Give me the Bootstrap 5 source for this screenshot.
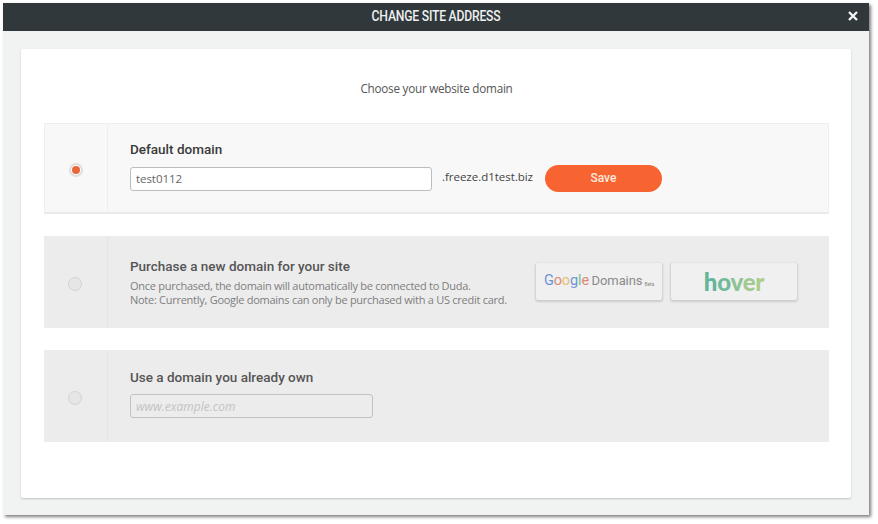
<!DOCTYPE html>
<html lang="en">
<head>
<meta charset="utf-8">
<title>Change site address</title>
<link href="https://cdn.jsdelivr.net/npm/bootstrap@5.3.0/dist/css/bootstrap.min.css" rel="stylesheet">
<style>
html,body{background:#fff;height:100%;overflow:hidden}
body{font-family:"Open Sans","Liberation Sans",sans-serif;color:#555}
.shell{margin:3px 0 0 3px;width:866px;height:512px;background:#f1f2f2;box-shadow:2px 2px 3px rgba(0,0,0,.5)}
.topbar{height:28px;background:#30383c;color:#eef0f0;font:500 14px/26px Roboto,sans-serif;letter-spacing:-.25px;padding-bottom:2px}
.ttl{display:inline-block;transform:scaleX(.87)}
.closer{right:7px;top:4px;width:18px;height:18px;padding:0;border:0;background:none}
.panel{margin:18px 18px 0;height:449px;background:#fff;border-radius:2px;box-shadow:0 1px 2px rgba(0,0,0,.2);padding:0 22px 0 23px}
.intro{height:74px;padding-top:30px;font-size:11.7px;line-height:18px;letter-spacing:-.24px;color:#555;text-align:center}
.opt{height:92px;margin-bottom:22px;background:#ececec}
.opt.on{height:91px;background:#f8f8f8;border:1px solid #eee;border-bottom:2px solid #eaeaea}
.radiocell{width:64px;padding:3px 1px 0 0;border-right:1px solid #e6e6e6}
.on .radiocell{width:63px;padding-right:0;border-right-color:#eee}
.dot{width:14px;height:14px;border-radius:50%;border:1px solid #d4d4d4;background:#e6e6e6}
.on .dot{background:#fff;border:2px solid #e2dcda;position:relative}
.on .dot::after{content:"";position:absolute;inset:1px;border-radius:50%;background:#e8663a}
.optbody{padding-left:22px}
.optname{font:500 13.5px/18px Roboto,sans-serif;color:#555;margin:0}
.on .optname{color:#3a3a3a}
.toprow{padding-top:16px}
.toprow .optname{margin-bottom:7px}
.ownrow{padding-top:18px}
.ownrow .optname{margin-bottom:8px}
.field{height:24px;border:1px solid #bdbdbd;border-radius:3px;font-size:11.6px;line-height:20px;padding:0 5px;color:#666;background:#fff;box-shadow:none;letter-spacing:-.1px}
.field:focus{box-shadow:none}
.w301{width:302px}
.w243{width:243px;background:#ececec;border-color:#c2c2c2;font-size:12px;letter-spacing:0}
.field::placeholder{color:#c3c3c3;font-style:italic}
.suffix{font-size:11.5px;color:#444;margin:0 0 3px 10px;letter-spacing:-.03px}
.savebtn{width:117px;height:27px;margin-left:12px;padding:0;border:0;border-radius:14px;background:#f76432;color:#fde9df;font:500 12px/27px Roboto,sans-serif}
.savebtn:hover{background:#f76432;color:#fde9df}
.note{font-size:11px;line-height:14.4px;color:#7e7e7e;margin:4px 0 0;letter-spacing:-.27px;white-space:nowrap}
.logobtn{width:126px;height:37px;background:#f0f0f0;box-shadow:0 1px 2px 1px rgba(0,0,0,.13);border-radius:2px}
.logos{gap:9px;margin-left:auto;margin-right:32px;margin-top:-1px}
.gd{font:400 14.5px/1 Roboto,sans-serif;color:#8a8a8a;letter-spacing:-.1px;white-space:nowrap}
.gd i{font-style:normal}
.gdword{font-size:13px;margin-left:-1px}
.gd sub{font-size:5px;bottom:-.2em;margin-left:2px}
.hv{font:900 24px/1 Lato,sans-serif;letter-spacing:-.2px}
</style>
</head>
<body>
<div class="shell d-flex flex-column">
  <div class="topbar text-center position-relative"><span class="ttl">CHANGE SITE ADDRESS</span>
    <button class="closer position-absolute d-flex align-items-center justify-content-center" type="button" aria-label="Close">
      <svg width="10" height="10" viewBox="0 0 10 10"><path d="M1 1l8 8M9 1l-8 8" stroke="#f4f4f4" stroke-width="2.4"/></svg>
    </button>
  </div>
  <div class="panel">
    <div class="intro">Choose your website domain</div>

    <div class="opt on d-flex">
      <div class="radiocell d-flex align-items-center justify-content-center"><span class="dot d-block"></span></div>
      <div class="optbody toprow flex-grow-1">
        <p class="optname">Default domain</p>
        <div class="d-flex align-items-center">
          <input class="form-control field w301" type="text" value="test0112">
          <span class="suffix">.freeze.d1test.biz</span>
          <button class="btn savebtn" type="button">Save</button>
        </div>
      </div>
    </div>

    <div class="opt d-flex">
      <div class="radiocell d-flex align-items-center justify-content-center"><span class="dot d-block"></span></div>
      <div class="optbody flex-grow-1 d-flex align-items-center">
        <div>
          <p class="optname">Purchase a new domain for your site</p>
          <p class="note">Once purchased, the domain will automatically be connected to Duda.<br>Note: Currently, Google domains can only be purchased with a US credit card.</p>
        </div>
        <div class="logos d-flex">
          <div class="logobtn d-flex align-items-center justify-content-center">
            <span class="gd"><i style="color:#6c94d6">G</i><i style="color:#dd8a78">o</i><i style="color:#e3c06c">o</i><i style="color:#6c94d6">g</i><i style="color:#7ebd8c">l</i><i style="color:#dd8a78">e</i> <span class="gdword">Domains</span><sub>Beta</sub></span>
          </div>
          <div class="logobtn d-flex align-items-center justify-content-center">
            <span class="hv"><i class="fst-normal" style="color:#62b59b">h</i><i class="fst-normal" style="color:#70b99a">o</i><i class="fst-normal" style="color:#8cc394">v</i><i class="fst-normal" style="color:#a0ca8f">e</i><i class="fst-normal" style="color:#aacd8d">r</i></span>
          </div>
        </div>
      </div>
    </div>

    <div class="opt d-flex">
      <div class="radiocell d-flex align-items-center justify-content-center"><span class="dot d-block"></span></div>
      <div class="optbody ownrow flex-grow-1">
        <p class="optname">Use a domain you already own</p>
        <input class="form-control field w243" type="text" placeholder="www.example.com">
      </div>
    </div>
  </div>
</div>
<script src="https://cdn.jsdelivr.net/npm/bootstrap@5.3.0/dist/js/bootstrap.bundle.min.js"></script>
</body>
</html>
